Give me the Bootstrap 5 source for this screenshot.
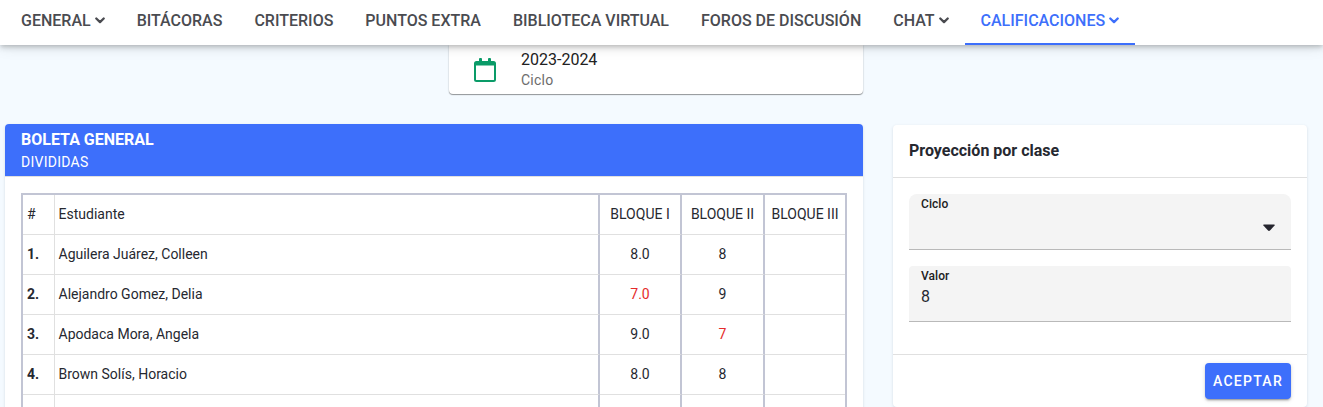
<!DOCTYPE html>
<html lang="es">
<head>
<meta charset="utf-8">
<meta name="viewport" content="width=device-width, initial-scale=1">
<title>Boleta general</title>
<link href="https://cdn.jsdelivr.net/npm/bootstrap@5.3.0/dist/css/bootstrap.min.css" rel="stylesheet">
<style>
  :root { --brand: #3d6ffb; --ink: #262830; --line: #e0e0e0; --block: #c2c5d4; }
  body { font-family: Roboto, "Liberation Sans", sans-serif; background: #f4faff; color: var(--ink); height: 407px; overflow: hidden; }
  .topbar { height: 45px; padding: 0 5px; background: #fff; z-index: 5; box-shadow: 0 2px 4px -1px rgba(0,0,0,.16), 0 4px 5px rgba(0,0,0,.08), 0 1px 14px rgba(0,0,0,.13); }
  .topbar .nav-link { height: 45px; padding: 9px 16px 0; font-size: 16px; line-height: 24px; font-weight: 500; color: #4a4b50; white-space: nowrap; }
  .topbar .nav-link.active { color: var(--brand); border-bottom: 2px solid var(--brand); }
  .topbar svg { width: 10px; height: 7px; margin-left: 4px; vertical-align: 2px; fill: none; stroke: currentColor; stroke-width: 2.3; stroke-linecap: round; stroke-linejoin: round; }
  .page-grid { display: grid; grid-template-columns: 858px 414px; column-gap: 30px; padding-left: 5px; height: 362px; overflow: hidden; }
  .panel { background: #fff; border: 0; border-radius: 4px; box-shadow: 0 1px 3px rgba(50,60,90,.16); }
  .cycle { width: 414px; height: 49px; margin-bottom: 30px; padding: 3px 24px 0 25px; border-radius: 0 0 4px 4px; box-shadow: 0 1px 1px rgba(0,0,0,.38), 0 0 2px rgba(0,0,0,.16); }
  .cycle svg { width: 22px; height: 24px; margin-top: 10px; margin-right: 25px; }
  .cycle-name { font-size: 16px; line-height: 24px; color: #212121; }
  .cycle-note { font-size: 14px; line-height: 18px; margin-top: -1px; letter-spacing: .25px; color: #6c6c6c; }
  .report-head { height: 53px; padding: 4px 16px 0; background: var(--brand); color: #fff; border-bottom: 1px solid var(--line); border-radius: 4px 4px 0 0; }
  .report-head h1 { font-size: 16px; line-height: 24px; font-weight: 700; margin: 0; }
  .report-head p { font-size: 14px; line-height: 21px; letter-spacing: .25px; margin: 0; }
  .grades { width: 826px; margin: 16px 16px 0; table-layout: fixed; border-collapse: separate; border-spacing: 0; border: 2px solid var(--block); font-size: 14px; line-height: 20px; }
  .grades th, .grades td { height: 40px; padding: 0 4px 1px; border-bottom: 1px solid var(--line); border-right: 2px solid var(--block); vertical-align: middle; font-weight: 400; white-space: nowrap; }
  .grades th:first-child, .grades td:first-child { border-right: 1px solid var(--line); }
  .grades th:nth-child(2), .grades td:nth-child(2) { padding-left: 3.5px; }
  .grades td:first-child { font-weight: 700; }
  .grades th:last-child, .grades td:last-child { border-right: 0; }
  .low { color: #e52b2b; }
  .side { margin-top: 80px; height: 282px; }
  .side-head { height: 53px; padding: 14px 16px 0; border-bottom: 1px solid var(--line); }
  .side-head h2 { font-size: 16px; line-height: 24px; font-weight: 700; margin: 0; }
  .side-body { height: 177px; padding: 16px; border-bottom: 1px solid var(--line); }
  .field { height: 56px; padding: 2px 12px 0; background: #f4f4f4; border-bottom: 1px solid #b9b9b9; border-radius: 4px 4px 0 0; margin-bottom: 16px; }
  .field.select { border-radius: 8px 8px 0 0; }
  .field-label { font-size: 12px; line-height: 16px; font-weight: 500; letter-spacing: .07px; color: #212121; }
  .field-value { font-size: 16px; line-height: 26px; }
  .field svg { width: 12px; height: 8px; margin: 12px 4px 0 auto; fill: #25252e; }
  .accept { width: 86px; height: 36px; padding: 0; background: var(--brand); color: #fff; border: 0; border-radius: 4px; font-size: 14px; font-weight: 500; letter-spacing: 1.25px; box-shadow: 0 3px 1px -2px rgba(0,0,0,.2), 0 2px 2px rgba(0,0,0,.14), 0 1px 5px rgba(0,0,0,.12); }
</style>
</head>
<body>
<nav class="topbar nav flex-nowrap position-relative">
  <a class="nav-link">GENERAL<svg viewBox="0 0 10 7"><path d="M1.3 1.5 5 5.1 8.7 1.5"/></svg></a>
  <a class="nav-link">BITÁCORAS</a>
  <a class="nav-link">CRITERIOS</a>
  <a class="nav-link">PUNTOS EXTRA</a>
  <a class="nav-link">BIBLIOTECA VIRTUAL</a>
  <a class="nav-link">FOROS DE DISCUSIÓN</a>
  <a class="nav-link">CHAT<svg viewBox="0 0 10 7"><path d="M1.3 1.5 5 5.1 8.7 1.5"/></svg></a>
  <a class="nav-link active">CALIFICACIONES<svg viewBox="0 0 10 7"><path d="M1.3 1.5 5 5.1 8.7 1.5"/></svg></a>
</nav>
<main class="page-grid align-items-start">
  <div>
    <section class="panel cycle ms-auto d-flex align-items-start">
      <svg viewBox="0 0 22 24"><path fill="#0a9b68" fill-rule="evenodd" d="M5 1q0-1 1-1h1q1 0 1 1v2h6V1q0-1 1-1h1q1 0 1 1v2h2.500a2.500 2.500 0 0 1 2.500 2.500v16a2.500 2.500 0 0 1-2.500 2.500h-17A2.500 2.500 0 0 1 0 21.500v-16A2.500 2.500 0 0 1 2.500 3H5zM2 7.500v14q0 .5.500.5h17q.5 0 .5-.5v-14z"/></svg>
      <div>
        <div class="cycle-name">2023-2024</div>
        <div class="cycle-note">Ciclo</div>
      </div>
    </section>
    <section class="panel">
      <header class="report-head">
        <h1>BOLETA GENERAL</h1>
        <p>DIVIDIDAS</p>
      </header>
      <table class="grades">
        <colgroup><col style="width:32px"><col style="width:545px"><col style="width:82px"><col style="width:83px"><col style="width:80px"></colgroup>
        <thead><tr><th>#</th><th>Estudiante</th><th class="text-center">BLOQUE I</th><th class="text-center">BLOQUE II</th><th class="text-center">BLOQUE III</th></tr></thead>
        <tbody>
          <tr><td>1.</td><td>Aguilera Juárez, Colleen</td><td class="text-center">8.0</td><td class="text-center">8</td><td></td></tr>
          <tr><td>2.</td><td>Alejandro Gomez, Delia</td><td class="text-center low">7.0</td><td class="text-center">9</td><td></td></tr>
          <tr><td>3.</td><td>Apodaca Mora, Angela</td><td class="text-center">9.0</td><td class="text-center low">7</td><td></td></tr>
          <tr><td>4.</td><td>Brown Solís, Horacio</td><td class="text-center">8.0</td><td class="text-center">8</td><td></td></tr>
          <tr><td></td><td></td><td></td><td></td><td></td></tr>
        </tbody>
      </table>
    </section>
  </div>
  <aside class="panel side">
    <header class="side-head"><h2>Proyección por clase</h2></header>
    <div class="side-body">
      <div class="field select">
        <div class="field-label">Ciclo</div>
        <svg class="d-block" viewBox="0 0 12 8"><path d="M.8.5h10.400q.8.300.4 1.100L7.200 6.300Q6 7.500 4.800 6.300L.4 1.600Q0 .8.8.5z"/></svg>
      </div>
      <div class="field">
        <div class="field-label">Valor</div>
        <div class="field-value">8</div>
      </div>
    </div>
    <footer class="d-flex justify-content-end pt-2 px-3">
      <button class="btn accept" type="button">ACEPTAR</button>
    </footer>
  </aside>
</main>
<script src="https://cdn.jsdelivr.net/npm/bootstrap@5.3.0/dist/js/bootstrap.bundle.min.js"></script>
</body>
</html>
